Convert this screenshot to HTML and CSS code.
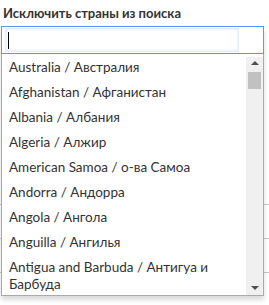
FILE: index.html
```html
<!DOCTYPE html>
<html lang="ru">
<head>
  <meta charset="UTF-8" />
  <meta name="viewport" content="width=device-width, initial-scale=1.0" />
  <title>Исключить страны</title>
  <link rel="stylesheet" href="styles.css">
</head>
<body>
  <div class="form-bg">
    <div class="form-row"></div>
    <div class="form-row"></div>
    <div class="form-row"></div>
  </div>

  <div class="field">
    <label class="field-label">Исключить страны из поиска</label>

    <div class="select-drop">
      <div class="select-search">
        <div class="search-input"><span class="caret"></span></div>
      </div>

      <div class="select-results">
        <ul class="results-list">
          <li>Australia / Австралия</li>
          <li>Afghanistan / Афганистан</li>
          <li>Albania / Албания</li>
          <li>Algeria / Алжир</li>
          <li>American Samoa / о-ва Самоа</li>
          <li>Andorra / Андорра</li>
          <li>Angola / Ангола</li>
          <li>Anguilla / Ангилья</li>
          <li>Antigua and Barbuda / Антигуа и Барбуда</li>
        </ul>
        <div class="scrollbar">
          <span class="arrow arrow-up"></span>
          <span class="thumb"></span>
          <span class="arrow arrow-down"></span>
        </div>
      </div>
    </div>
  </div>
</body>
</html>
```

FILE: styles.css
```css
body {
  margin: 0;
  background: #fff;
  font-family: Lato, 'Open Sans', sans-serif;
  color: #333;
  position: relative;
  height: 305px;
  overflow: hidden;
}

/* form rows under the open dropdown */
.form-bg {
  padding-top: 171px;
}

.form-row {
  height: 33px;
  border-bottom: 1px solid #c6c6c6;
}

.field {
  position: absolute;
  top: 0;
  left: 0;
  width: 269px;
}

.field-label {
  display: block;
  padding: 4px 0 0 3px;
  height: 26px;
  box-sizing: border-box;
  font-size: 13px;
  font-weight: bold;
  line-height: 18px;
  color: #333;
}

.select-drop {
  margin-left: 1px;
  width: 263px;
  background: #fff;
  box-shadow: 0 4px 5px rgba(0, 0, 0, 0.15);
}

.select-search {
  height: 28px;
  box-sizing: border-box;
  border: 1px solid #5897fb;
  padding: 1px 24px 1px 3px;
}

.search-input {
  height: 24px;
  box-sizing: border-box;
  border: 1px solid #e3eefd;
  box-shadow: inset 0 0 3px rgba(88, 151, 251, 0.25);
  padding: 3px 0 0 2px;
}

.caret {
  display: block;
  width: 1px;
  height: 17px;
  background: #000;
}

.select-results {
  display: flex;
  height: 242px;
  box-sizing: border-box;
  border: 1px solid #aaa;
  border-top: none;
}

.results-list {
  flex: 1;
  margin: 0;
  padding: 1px 0 0;
  list-style: none;
  overflow: hidden;
}

.results-list li {
  padding: 4px 20px 4px 7px;
  font-size: 13.5px;
  line-height: 17px;
  color: #333;
}

.scrollbar {
  width: 17px;
  margin-top: 3px;
  background: #f0f0f0;
  display: flex;
  flex-direction: column;
  align-items: center;
}

.arrow {
  width: 0;
  height: 0;
  border-left: 4px solid transparent;
  border-right: 4px solid transparent;
}

.arrow-up {
  margin-top: 4px;
  border-bottom: 4px solid #505050;
}

.arrow-down {
  margin-top: auto;
  margin-bottom: 5px;
  border-top: 4px solid #505050;
}

.thumb {
  margin-top: 7px;
  width: 13px;
  height: 17px;
  background: #c1c1c1;
}
```
